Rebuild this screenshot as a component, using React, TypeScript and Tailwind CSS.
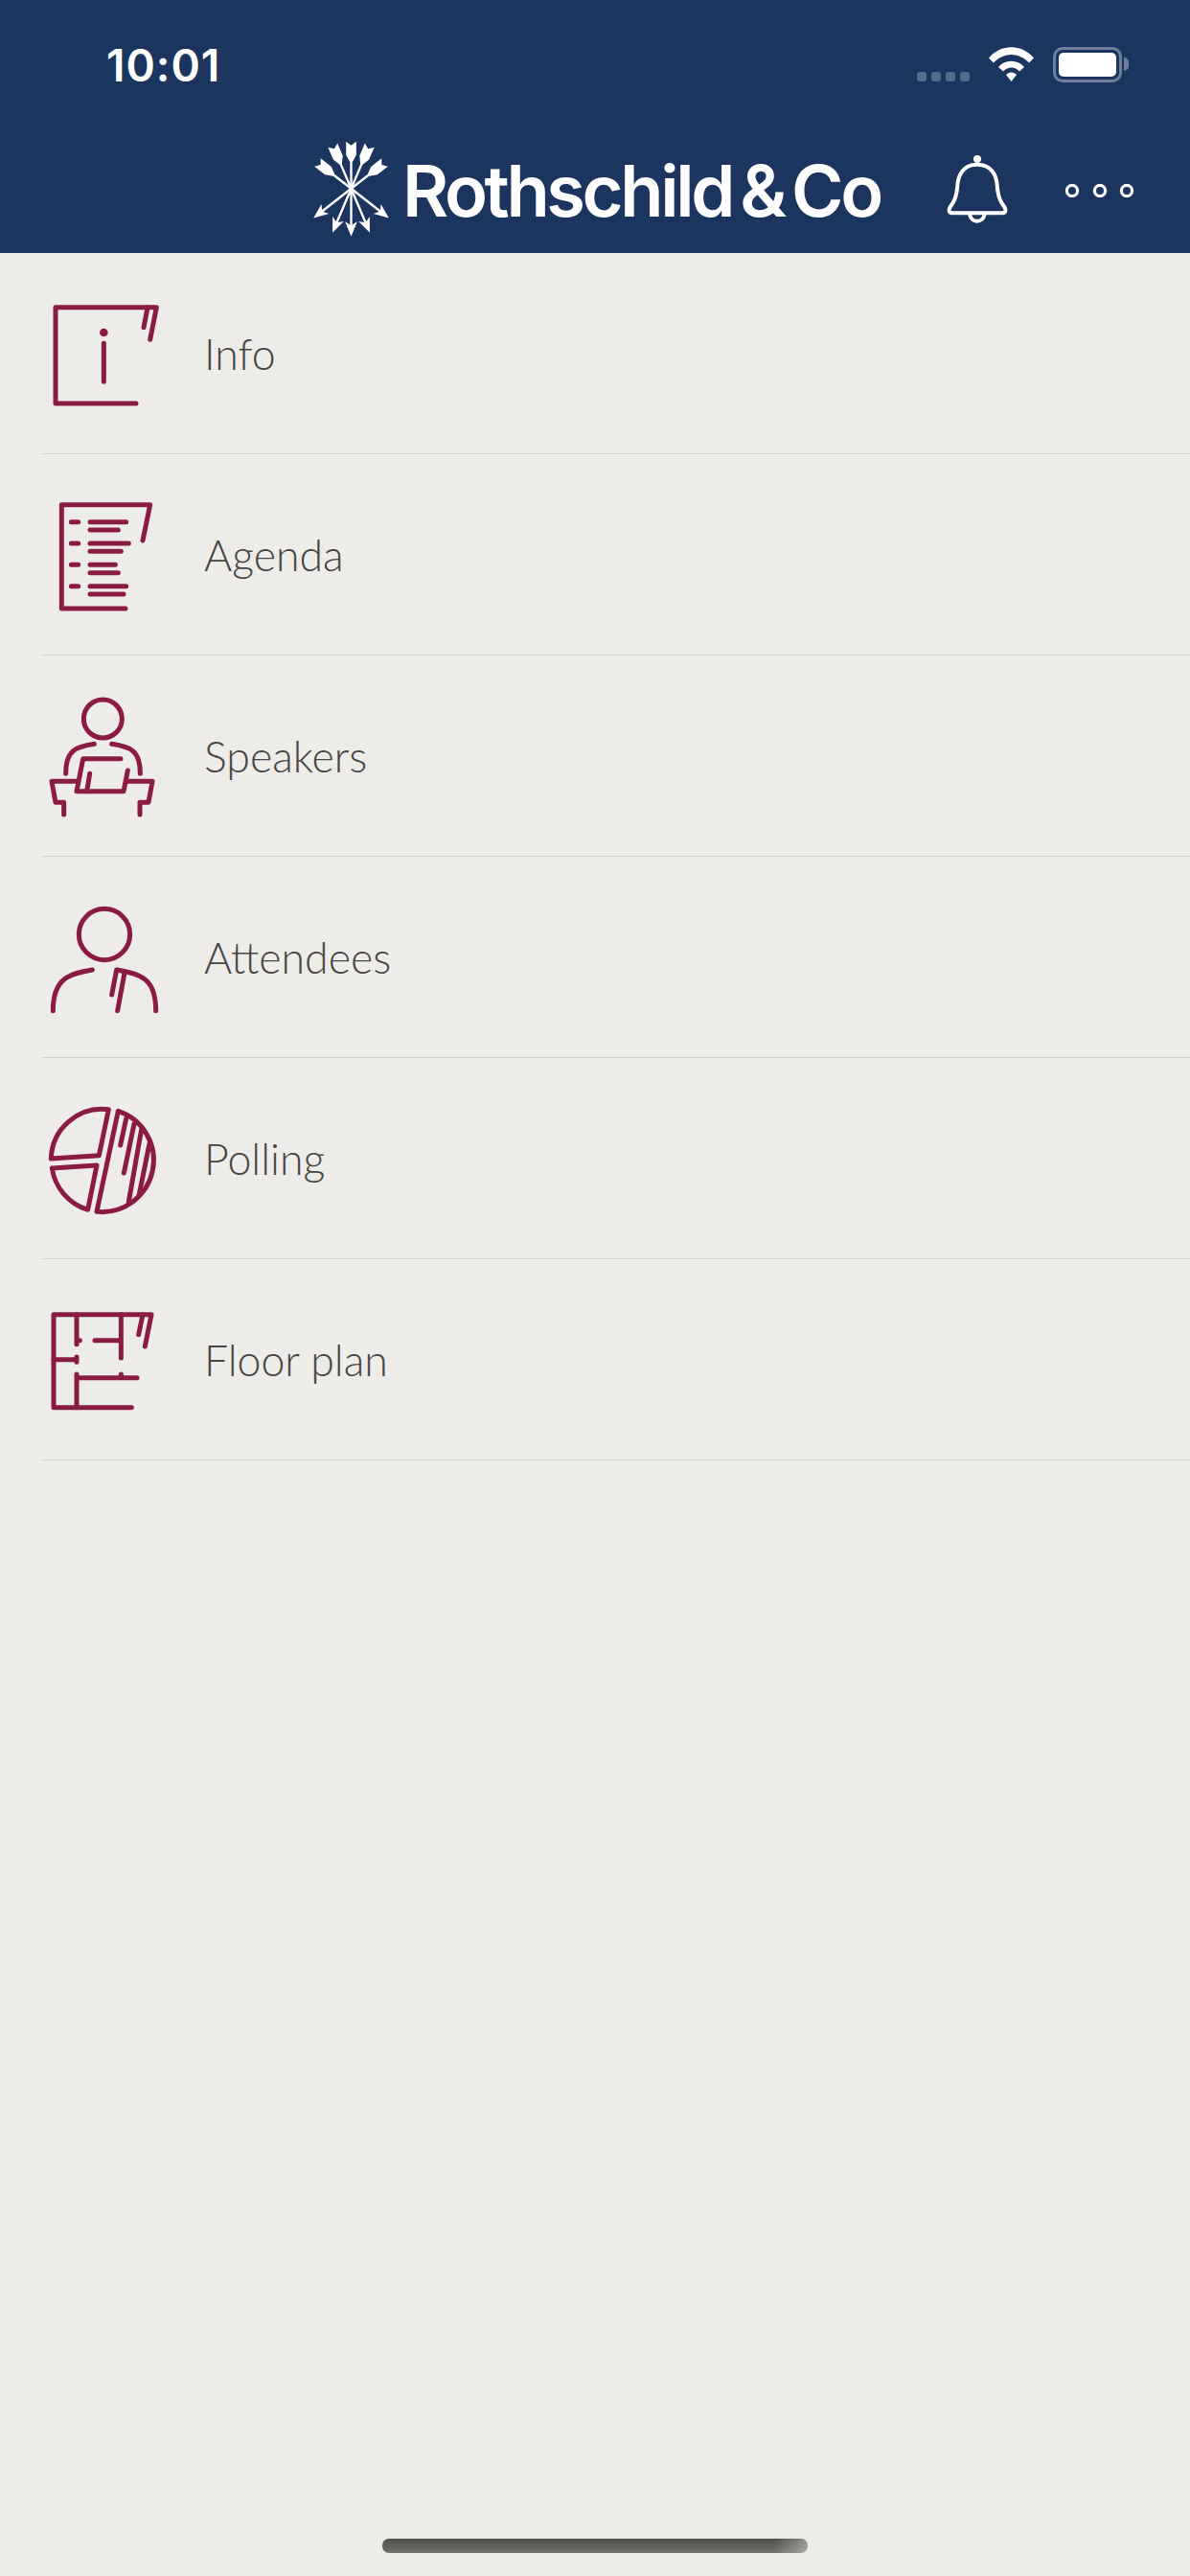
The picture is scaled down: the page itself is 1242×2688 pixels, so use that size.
import React from "react";

// Shared wrapper for the menu line icons, drawn on a 450 x 627 grid
function MenuIcon({ top, children }: { top: number; children: React.ReactNode }) {
  return (
    <svg
      viewBox={`0 ${top} 450 627`}
      className="w-[150px] h-[209px] shrink-0 -ml-[15px] text-[#8a1c43]"
      fill="none"
      stroke="currentColor"
      strokeWidth={15}
      strokeLinecap="round"
      strokeLinejoin="round"
    >
      {children}
    </svg>
  );
}

const InfoIcon = () => (
  <MenuIcon top={-78}>
    <path d="M336 393H84V92H400L380 193" />
    <path d="M372 92L360 155" />
    <circle cx="235" cy="171" r="13" fill="currentColor" stroke="none" />
    <path d="M235 205V325" />
  </MenuIcon>
);

const AgendaIcon = () => (
  <MenuIcon top={552}>
    <path d="M303 1035H103V710H380L357 822" />
    <path d="M133 764H155M192 764H305M192 789H280M133 831H155M192 831H313M192 856H289M133 898H155M192 898H271M192 923H280M133 965H155M192 965H305M192 990H297" />
  </MenuIcon>
);

const SpeakerIcon = () => (
  <MenuIcon top={-78}>
    <circle cx="232" cy="120" r="60" />
    <path d="M205 199C150 208 116 215 116 292" />
    <path d="M260 199C315 208 349 215 349 292" />
    <path d="M288 245H170L150 347H297L310 282" />
    <path d="M191 292L182 347" />
    <path d="M150 316H72L84 382H110V420" />
    <path d="M305 316H387L375 382H348V420" />
  </MenuIcon>
);

const AttendeeIcon = () => (
  <MenuIcon top={552}>
    <circle cx="237" cy="795" r="80" />
    <path d="M199 906C130 918 76 930 76 1034" />
    <path d="M260 984L275 906C350 920 398 930 398 1034" />
    <path d="M300 915L278 1034" />
  </MenuIcon>
);

const PollingIcon = () => (
  <MenuIcon top={-78}>
    <path d="M250 83A160 160 0 0 0 70 237L220 227Z" />
    <path d="M73 267L213 258L185 397A160 160 0 0 1 73 267Z" />
    <path d="M280 88L213 403A162 162 0 0 0 280 88Z" />
    <path d="M305 112L287 195M330 128L298 282M353 145L313 372M378 190L345 353" />
  </MenuIcon>
);

const FloorPlanIcon = () => (
  <MenuIcon top={552}>
    <path d="M322 1016H78V725H384L364 825" />
    <path d="M357 725L344 788" />
    <path d="M150 725V818M150 806H160M207 806H289M289 725V861" />
    <path d="M78 866H150M150 858V874" />
    <path d="M150 912V1016M150 923H339M289 912V923" />
  </MenuIcon>
);

// Five arrows crossing at the middle, fletching up and head down
function LogoMark() {
  const arrows = [
    { angle: 0, fletch: 0 },
    { angle: -23, fletch: 0 },
    { angle: 23, fletch: 0 },
    { angle: -52, fletch: 14 },
    { angle: 52, fletch: 14 },
  ];
  return (
    <svg viewBox="70 50 260 305" className="w-[87px] h-[102px] shrink-0" fill="white" stroke="none">
      {arrows.map((a) => (
        <g key={a.angle} transform={`rotate(${a.angle} 200 205)`}>
          <g transform={`translate(0 ${a.fletch})`}>
            <path d="M184 58L200 70L216 58V100L204 122H196L184 100Z" />
          </g>
          <rect x="196.5" y="110" width="7" height="215" />
          <path d="M200 354L181 308L200 320L219 308Z" />
        </g>
      ))}
    </svg>
  );
}

function StatusBar() {
  return (
    <div className="h-[110px] flex items-start pl-[111px] pt-[41px]">
      <span className="font-['Inter',sans-serif] font-semibold text-[46px] leading-[54px] tracking-[1px] text-white">
        10:01
      </span>
      <div className="ml-auto mr-[64px] flex items-start pt-[8px]">
        <div className="flex gap-[5px] mt-[26px]">
          <span className="w-[10px] h-[10px] rounded-[3px] bg-[#566a8b]" />
          <span className="w-[10px] h-[10px] rounded-[3px] bg-[#566a8b]" />
          <span className="w-[10px] h-[10px] rounded-[3px] bg-[#566a8b]" />
          <span className="w-[10px] h-[10px] rounded-[3px] bg-[#566a8b]" />
        </div>
        <svg viewBox="0 0 47 36" className="w-[47px] h-[36px] ml-[20px]" fill="white">
          <path d="M0 11.5C13 -3.5 34 -3.5 47 11.5L42 16.5C31 5 16 5 5 16.5Z" />
          <path d="M10 21C17 12.5 30 12.5 37 21L32 25.5C27 20 20 20 15 25.5Z" />
          <path d="M18 29C21 25.5 26 25.5 29 29L23.5 36Z" />
        </svg>
        <div className="ml-[20px] w-[72px] h-[37px] rounded-[10px] border-[3px] border-[#6d7f9d] p-[3px]">
          <div className="w-full h-full rounded-[5px] bg-white" />
        </div>
        <div className="ml-[2px] mt-[11px] w-[5px] h-[14px] rounded-r-[5px] bg-[#6d7f9d]" />
      </div>
    </div>
  );
}

function NavBar() {
  return (
    <div className="h-[154px] flex items-start pl-[323px]">
      <div className="mt-[35px]">
        <LogoMark />
      </div>
      <span className="ml-[10px] mt-[44px] font-['Inter',sans-serif] font-semibold text-[74px] leading-[90px] tracking-[-3.4px] [word-spacing:-7px] text-white whitespace-nowrap">
        Rothschild &amp; Co
      </span>
      <div className="ml-auto mr-[58px] mt-[50px] flex items-start">
        <svg
          viewBox="40 30 210 225"
          className="w-[70px] h-[75px]"
          fill="none"
          stroke="white"
          strokeWidth={12}
          strokeLinejoin="round"
          strokeLinecap="round"
        >
          <circle cx="145" cy="48" r="12" fill="white" stroke="none" />
          <path d="M145 65C100 65 85 100 83 130C80 170 70 185 60 198Q50 217 70 217H220Q240 217 230 198C220 185 210 170 207 130C205 100 190 65 145 65Z" />
          <path d="M122 224A23 23 0 0 0 167 224" />
        </svg>
        <svg viewBox="0 0 72 14" className="w-[72px] h-[14px] ml-[57px] mt-[32px]" fill="none" stroke="white" strokeWidth={3.2}>
          <circle cx="7" cy="7" r="5.6" />
          <circle cx="36" cy="7" r="5.6" />
          <circle cx="64" cy="7" r="5.6" />
        </svg>
      </div>
    </div>
  );
}

const items = [
  { label: "Info", Icon: InfoIcon },
  { label: "Agenda", Icon: AgendaIcon },
  { label: "Speakers", Icon: SpeakerIcon },
  { label: "Attendees", Icon: AttendeeIcon },
  { label: "Polling", Icon: PollingIcon },
  { label: "Floor plan", Icon: FloorPlanIcon },
];

export default function App() {
  return (
    <div className="w-[1242px] h-[2688px] flex flex-col bg-[#eeece8] overflow-hidden">
      <header className="h-[264px] shrink-0 bg-[#1c355e]">
        <StatusBar />
        <NavBar />
      </header>

      <ul className="ml-[45px]">
        {items.map(({ label, Icon }) => (
          <li key={label} className="h-[210px] flex items-center border-b border-[#cfcdc9]">
            <Icon />
            <span className="ml-[33px] mt-[1px] font-['Lato',sans-serif] font-light text-[44.6px] text-[#464543]">
              {label}
            </span>
          </li>
        ))}
      </ul>

      <div className="mt-auto mb-[24px] mx-auto w-[444px] h-[15px] rounded-[7px] bg-[linear-gradient(100deg,transparent_92%,rgba(238,236,232,0.45)_100%),linear-gradient(#4f4f4d,#70706d)]" />
    </div>
  );
}
